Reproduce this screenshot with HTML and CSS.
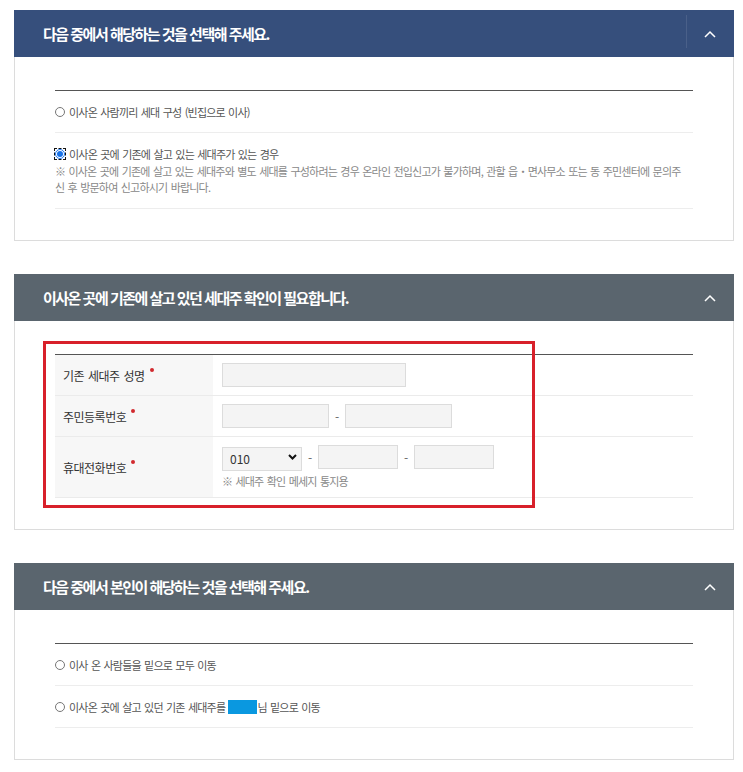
FILE: index.html
```html
<!DOCTYPE html>
<html lang="ko">
<head>
<meta charset="utf-8">
<title>전입신고</title>
<link rel="stylesheet" href="styles.css">
</head>
<body>
<div class="page">

  <section class="panel">
    <div class="panel-head head-blue">
      <h2 class="panel-title">다음 중에서 해당하는 것을 선택해 주세요.</h2>
      <button type="button" class="toggle toggle-divided" aria-label="접기">
        <svg class="chev" width="12" height="8" viewBox="0 0 12 8"><polyline points="1,7 6,2 11,7" fill="none" stroke="#fff" stroke-width="1.5"/></svg>
      </button>
    </div>
    <div class="panel-body">
      <ul class="opt-list">
        <li class="opt">
          <label class="opt-line"><input type="radio" name="q1" class="radio">이사온 사람끼리 세대 구성 (빈집으로 이사)</label>
        </li>
        <li class="opt opt-tall">
          <label class="opt-line"><input type="radio" name="q1" class="radio radio-focus" checked>이사온 곳에 기존에 살고 있는 세대주가 있는 경우</label>
          <p class="note">※ 이사온 곳에 기존에 살고 있는 세대주와 별도 세대를 구성하려는 경우 온라인 전입신고가 불가하며, 관할 읍・면사무소 또는 동 주민센터에 문의주<br>신 후 방문하여 신고하시기 바랍니다.</p>
        </li>
      </ul>
    </div>
  </section>

  <section class="panel">
    <div class="panel-head head-gray">
      <h2 class="panel-title">이사온 곳에 기존에 살고 있던 세대주 확인이 필요합니다.</h2>
      <button type="button" class="toggle" aria-label="접기">
        <svg class="chev" width="12" height="8" viewBox="0 0 12 8"><polyline points="1,7 6,2 11,7" fill="none" stroke="#fff" stroke-width="1.5"/></svg>
      </button>
    </div>
    <div class="panel-body body-marked">
      <table class="form-table">
        <tr>
          <th>기존 세대주 성명<span class="req"></span></th>
          <td><div class="field-row"><input type="text" class="inp inp-name"></div></td>
        </tr>
        <tr>
          <th>주민등록번호<span class="req"></span></th>
          <td><div class="field-row"><input type="text" class="inp inp-half"><span class="dash">-</span><input type="password" class="inp inp-half"></div></td>
        </tr>
        <tr>
          <th>휴대전화번호<span class="req"></span></th>
          <td>
            <div class="field-row">
              <span class="select-wrap">
                <select class="sel"><option>010</option><option>011</option><option>016</option><option>017</option></select>
                <svg class="sel-arrow" width="9" height="6" viewBox="0 0 9 6"><polyline points="1,1 4.5,4.5 8,1" fill="none" stroke="#111" stroke-width="2"/></svg>
              </span>
              <span class="dash">-</span><input type="text" class="inp inp-tel"><span class="dash">-</span><input type="text" class="inp inp-tel">
            </div>
            <p class="hint">※ 세대주 확인 메세지 통지용</p>
          </td>
        </tr>
      </table>
      <div class="mark-box"></div>
    </div>
  </section>

  <section class="panel">
    <div class="panel-head head-gray">
      <h2 class="panel-title">다음 중에서 본인이 해당하는 것을 선택해 주세요.</h2>
      <button type="button" class="toggle" aria-label="접기">
        <svg class="chev" width="12" height="8" viewBox="0 0 12 8"><polyline points="1,7 6,2 11,7" fill="none" stroke="#fff" stroke-width="1.5"/></svg>
      </button>
    </div>
    <div class="panel-body">
      <ul class="opt-list">
        <li class="opt">
          <label class="opt-line"><input type="radio" name="q3" class="radio">이사 온 사람들을 밑으로 모두 이동</label>
        </li>
        <li class="opt">
          <label class="opt-line"><input type="radio" name="q3" class="radio">이사온 곳에 살고 있던 기존 세대주를 (<span class="redact"></span>님 밑으로 이동</label>
        </li>
      </ul>
    </div>
  </section>

</div>
</body>
</html>
```

FILE: styles.css
```css
* { box-sizing: border-box; }

body {
  margin: 0;
  background: #fff;
  font-family: "Noto Sans CJK KR", "Noto Sans", sans-serif;
  color: #555;
}

.page {
  padding: 10px 0 0 14px;
}

.panel {
  width: 720px;
  margin-bottom: 33px;
}

.panel-head {
  display: flex;
  align-items: center;
  height: 47px;
  padding-left: 29px;
  color: #fff;
}

.head-blue { background: #364f7c; }
.head-gray { background: #5a656e; }

.panel-title {
  flex: 1;
  margin: 0;
  font-size: 15px;
  font-weight: 700;
  line-height: 20px;
  letter-spacing: -1.5px;
}

.toggle {
  position: relative;
  width: 48px;
  height: 47px;
  padding: 0;
  border: 0;
  background: transparent;
  display: flex;
  align-items: center;
  justify-content: center;
}

.toggle-divided::before {
  content: "";
  position: absolute;
  left: 0;
  top: 5px;
  bottom: 9px;
  width: 1px;
  background: rgba(255, 255, 255, 0.1);
}

.chev { display: block; }

.panel-body {
  border: 1px solid #dcdcdc;
  border-top: 0;
  padding: 33px 40px 31px 40px;
}

.body-marked { position: relative; }

.opt-list {
  list-style: none;
  margin: 0;
  padding: 0;
  border-top: 1px solid #555;
}

.opt {
  padding: 12px 0;
  border-bottom: 1px solid #ededed;
}

.opt-tall { padding-bottom: 13px; }

.opt-line {
  display: flex;
  align-items: center;
  height: 17px;
  font-size: 11px;
  letter-spacing: -0.8px;
  word-spacing: 1px;
  color: #555;
  white-space: nowrap;
}

.radio {
  width: 10px;
  height: 10px;
  margin: 0 4px 0 0;
  accent-color: #1a73e8;
  flex: none;
}

.radio-focus {
  outline: 1px dashed #111;
  outline-offset: 0;
}

.note {
  margin: 1px 0 0;
  font-size: 11px;
  line-height: 16px;
  letter-spacing: -0.8px;
  word-spacing: 1px;
  color: #888;
  white-space: nowrap;
}

.redact {
  display: inline-block;
  width: 29px;
  height: 14px;
  margin-left: -3px;
  background: #0a98e0;
}

.form-table {
  width: 100%;
  border-collapse: separate;
  border-spacing: 0;
  border-top: 1px solid #555;
}

.form-table th {
  width: 158px;
  padding: 0 0 0 8px;
  background: #f7f7f7;
  border-bottom: 1px solid #ebebeb;
  text-align: left;
  font-weight: 400;
  font-size: 12px;
  letter-spacing: -0.5px;
  word-spacing: 1px;
  color: #333;
  white-space: nowrap;
}

.form-table td {
  padding: 8px 9px;
  border-bottom: 1px solid #ebebeb;
}

.req {
  display: inline-block;
  width: 4px;
  height: 4px;
  margin-left: 5px;
  border-radius: 50%;
  background: #d12a2f;
  vertical-align: 9px;
}

.field-row {
  display: flex;
  align-items: center;
  gap: 6px;
}

.inp {
  height: 24px;
  margin: 0;
  padding: 0 6px;
  border: 1px solid #dcdcdc;
  background: #f4f4f4;
  font-family: inherit;
  font-size: 12px;
}

.inp-name { width: 184px; }
.inp-half { width: 107px; }
.inp-tel { width: 80px; }

.dash {
  font-size: 12px;
  color: #666;
  width: 4px;
  text-align: center;
}

.select-wrap {
  position: relative;
  display: block;
  width: 80px;
  height: 24px;
}

.sel {
  appearance: none;
  -webkit-appearance: none;
  width: 80px;
  height: 24px;
  margin: 0;
  padding: 0 0 0 7px;
  border: 1px solid #dcdcdc;
  border-radius: 0;
  background: #f4f4f4;
  font-family: inherit;
  font-size: 12px;
  color: #333;
}

.sel-arrow {
  position: absolute;
  right: 5px;
  top: 9px;
  pointer-events: none;
}

.hint {
  margin: 4px 0 0;
  font-size: 11px;
  line-height: 16px;
  letter-spacing: -0.8px;
  word-spacing: 1px;
  color: #888;
}

.mark-box {
  position: absolute;
  left: 28px;
  top: 20px;
  width: 492px;
  height: 167px;
  border: 3px solid #d8202a;
  pointer-events: none;
}
```
